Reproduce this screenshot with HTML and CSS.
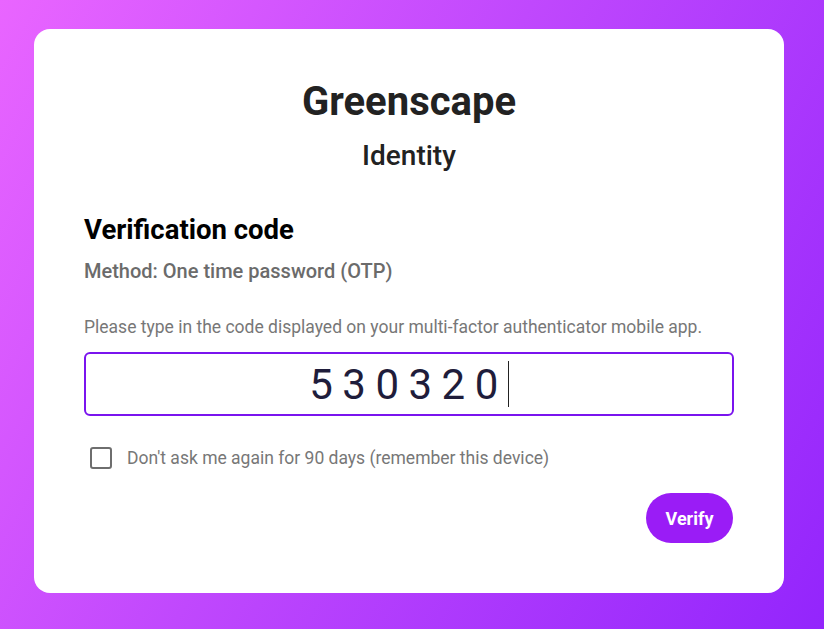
FILE: index.html
```html
<!DOCTYPE html>
<html lang="en">
<head>
    <meta charset="UTF-8">
    <meta name="viewport" content="width=device-width, initial-scale=1.0">
    <title>Greenscape Identity - Verification code</title>
    <link rel="stylesheet" href="styles.css">
</head>
<body>
    <div class="page">
        <div class="card">
            <h1 class="brand">Greenscape</h1>
            <div class="product">Identity</div>

            <h2 class="heading">Verification code</h2>
            <div class="method">Method: One time password (OTP)</div>

            <p class="hint">Please type in the code displayed on your multi-factor authenticator mobile app.</p>
            <div class="code-box">
                <span class="code">530320</span><span class="caret"></span>
            </div>

            <label class="remember">
                <span class="checkbox"></span>
                <span>Don't ask me again for 90 days (remember this device)</span>
            </label>

            <div class="actions">
                <button class="verify-btn">Verify</button>
            </div>
        </div>
    </div>
</body>
</html>
```

FILE: styles.css
```css
html, body {
    margin: 0;
    height: 100%;
}
body {
    font-family: 'Roboto', 'Liberation Sans', sans-serif;
    background: linear-gradient(120deg, #e965ff 0%, #c048fd 45%, #9325fc 100%);
    overflow: hidden;
}
.page {
    padding: 29px 0 0 34px;
}
.card {
    width: 750px;
    box-sizing: border-box;
    background-color: #ffffff;
    border-radius: 16px;
    padding: 49px 50px 50px 50px;
}
.brand {
    margin: 0;
    text-align: center;
    font-size: 40px;
    line-height: 48px;
    font-weight: 700;
    color: #222222;
}
.product {
    margin-top: 13px;
    text-align: center;
    font-size: 28px;
    line-height: 34px;
    font-weight: 500;
    color: #222222;
}
.heading {
    margin: 41px 0 0;
    font-size: 27.5px;
    line-height: 32px;
    font-weight: 700;
    color: #000000;
}
.method {
    margin-top: 13px;
    font-size: 20px;
    line-height: 24px;
    font-weight: 500;
    color: #6b6b6b;
}
.hint {
    margin: 32px 0 0;
    font-size: 17.5px;
    line-height: 24px;
    color: #777777;
}
.code-box {
    margin-top: 13px;
    height: 64px;
    box-sizing: border-box;
    border: 2px solid #7a14ee;
    border-radius: 6px;
    display: flex;
    align-items: center;
    justify-content: center;
}
.code {
    font-size: 42px;
    letter-spacing: 9.5px;
    color: #1f1d3b;
}
.caret {
    width: 1px;
    height: 46px;
    background-color: #222222;
}
.remember {
    margin-top: 30px;
    display: flex;
    align-items: center;
    gap: 15px;
    padding-left: 6px;
    font-size: 17.5px;
    line-height: 24px;
    color: #777777;
}
.checkbox {
    width: 18px;
    height: 18px;
    border: 2px solid #6e6e6e;
    border-radius: 3px;
}
.actions {
    margin-top: 23px;
    display: flex;
    justify-content: flex-end;
}
.verify-btn {
    width: 87px;
    height: 50px;
    margin-right: 1px;
    border: none;
    border-radius: 25px;
    background-color: #9a1cf6;
    color: #ffffff;
    font-family: 'Roboto', 'Liberation Sans', sans-serif;
    font-size: 18px;
    font-weight: 700;
    cursor: pointer;
}
```
